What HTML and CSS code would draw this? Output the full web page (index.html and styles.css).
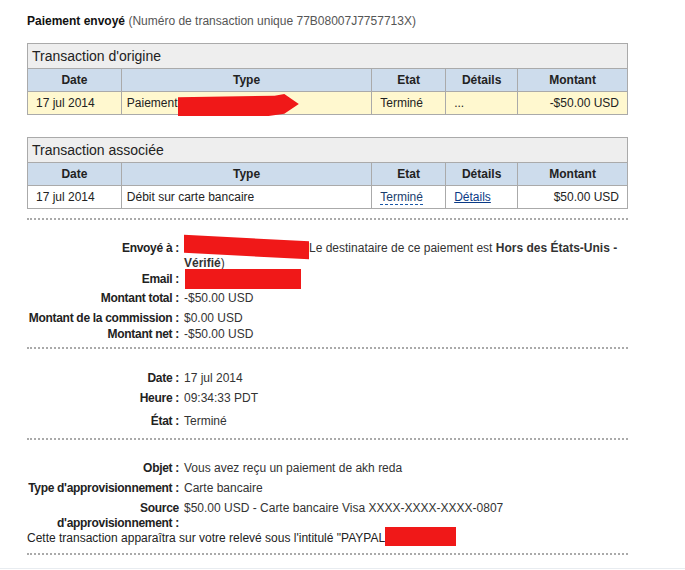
FILE: index.html
```html
<!DOCTYPE html>
<html lang="fr">
<head>
    <meta charset="UTF-8">
    <title>Paiement envoyé</title>
    <link rel="stylesheet" href="styles.css">
</head>
<body>
    <div class="page">
        <p class="title"><b>Paiement envoyé</b> (Numéro de transaction unique 77B08007J7757713X)</p>

        <table class="txn">
            <tr><th class="caption" colspan="5">Transaction d'origine</th></tr>
            <tr class="head">
                <th class="c-date">Date</th>
                <th class="c-type">Type</th>
                <th class="c-etat">Etat</th>
                <th class="c-det">Détails</th>
                <th class="c-amt">Montant</th>
            </tr>
            <tr class="row-hl">
                <td>17 jul 2014</td>
                <td class="type redact-cell">Paiement à <span class="redact arrow"></span></td>
                <td>Terminé</td>
                <td>...</td>
                <td class="amt">-$50.00 USD</td>
            </tr>
        </table>

        <table class="txn second">
            <tr><th class="caption" colspan="5">Transaction associée</th></tr>
            <tr class="head">
                <th class="c-date">Date</th>
                <th class="c-type">Type</th>
                <th class="c-etat">Etat</th>
                <th class="c-det">Détails</th>
                <th class="c-amt">Montant</th>
            </tr>
            <tr>
                <td>17 jul 2014</td>
                <td class="type">Débit sur carte bancaire</td>
                <td><span class="abbr">Terminé</span></td>
                <td><a href="#">Détails</a></td>
                <td class="amt">$50.00 USD</td>
            </tr>
        </table>

        <div class="section first">
            <div class="info sent">
                <span class="label">Envoyé à :</span>
                <span class="value"><span class="redact tilt"></span>Le destinataire de ce paiement est <b>Hors des États-Unis -</b><br><b>Vérifié</b>)</span>
            </div>
            <div class="info mail">
                <span class="label">Email :</span>
                <span class="value"><span class="redact email"></span></span>
            </div>
            <div class="info">
                <span class="label">Montant total :</span>
                <span class="value">-$50.00 USD</span>
            </div>
            <div class="info near">
                <span class="label">Montant de la commission :</span>
                <span class="value">$0.00 USD</span>
            </div>
            <div class="info last">
                <span class="label">Montant net :</span>
                <span class="value">-$50.00 USD</span>
            </div>
        </div>

        <div class="section mid">
            <div class="info">
                <span class="label">Date :</span>
                <span class="value">17 jul 2014</span>
            </div>
            <div class="info wide">
                <span class="label">Heure :</span>
                <span class="value">09:34:33 PDT</span>
            </div>
            <div class="info last">
                <span class="label">État :</span>
                <span class="value">Terminé</span>
            </div>
        </div>

        <div class="section">
            <div class="info">
                <span class="label">Objet :</span>
                <span class="value">Vous avez reçu un paiement de akh reda</span>
            </div>
            <div class="info">
                <span class="label">Type d'approvisionnement :</span>
                <span class="value">Carte bancaire</span>
            </div>
            <div class="info source">
                <span class="label">Source<br>d'approvisionnement :</span>
                <span class="value">$50.00 USD - Carte bancaire Visa XXXX-XXXX-XXXX-0807</span>
            </div>
            <p class="note">Cette transaction apparaîtra sur votre relevé sous l'intitulé "PAYPAL<span class="redact paypal"></span></p>
        </div>
        <div class="section end"></div>
    </div>
    <div class="footer-line"></div>
</body>
</html>
```

FILE: styles.css
```css
* {
    margin: 0;
    padding: 0;
    box-sizing: border-box;
}

body {
    font-family: "Liberation Sans", Arial, sans-serif;
    font-size: 12px;
    color: #222;
    background: #fff;
    overflow: hidden;
}

.page {
    width: 601px;
    margin-left: 27px;
    padding-top: 13px;
}

.title {
    color: #555;
    line-height: 16px;
    margin-bottom: 14px;
}

.title b {
    color: #111;
}

.txn {
    width: 601px;
    border-collapse: collapse;
    border: 1px solid #aaa;
}

.txn.second {
    margin-top: 22px;
}

.txn th, .txn td {
    border: 1px solid #aaa;
    padding: 0 8px;
    height: 23px;
}

.txn td.type {
    padding-left: 5px;
}

.txn .caption {
    background-color: #eeeeee;
    font-size: 14px;
    font-weight: normal;
    text-align: left;
    padding-left: 4px;
    height: 25px;
    color: #222;
}

.head th {
    background-color: #cddcec;
    font-weight: bold;
    text-align: center;
    color: #222;
}

.c-date { width: 94px; }
.c-type { width: 251px; }
.c-etat { width: 74px; }
.c-det { width: 72px; }
.c-amt { width: 110px; }

.row-hl td {
    background-color: #fff8cf;
}

.txn .amt {
    text-align: right;
}

.redact-cell {
    position: relative;
}

.redact {
    display: inline-block;
    background-color: #f01818;
    vertical-align: middle;
}

.redact.arrow {
    position: absolute;
    left: 56px;
    top: 2px;
    width: 121px;
    height: 22px;
    clip-path: polygon(0 15%, 80% 8%, 88% 0, 100% 45%, 88% 90%, 75% 100%, 0 100%);
}

.abbr {
    color: #1a3d6e;
    border-bottom: 1px dashed #1a58a8;
}

a {
    color: #0a3a86;
    text-decoration: underline;
}

.section {
    border-top: 2px dotted #aaa;
    padding: 21px 0 8px;
}

.section.first {
    margin-top: 9px;
    padding: 21px 0 6px;
}

.section.mid {
    padding: 22px 0 10px;
}

.info {
    display: flex;
    line-height: 14px;
    margin-bottom: 6px;
}

.info.sent {
    margin-bottom: -1px;
}

.info.mail {
    margin-bottom: 2px;
    align-items: center;
}

.info.near {
    margin-bottom: 2px;
}

.info.wide {
    margin-bottom: 9px;
}

.info.last {
    margin-bottom: 0;
}

.info.source {
    line-height: 15px;
    margin-bottom: 0;
}

.label {
    width: 157px;
    flex-shrink: 0;
    text-align: right;
    font-weight: bold;
    padding-right: 5px;
    color: #222;
    letter-spacing: -0.3px;
    white-space: nowrap;
}

.value {
    color: #333;
    flex: 1;
}

.redact.tilt {
    width: 125px;
    height: 18px;
    margin-top: -4px;
    transform: skewY(3deg);
}

.redact.email {
    width: 116px;
    height: 20px;
    margin-left: 1px;
}

.redact.paypal {
    width: 71px;
    height: 19px;
    vertical-align: top;
    margin: -4px 0 -1px;
}

.note {
    line-height: 14px;
}

.section.end {
    padding: 0;
}

.footer-line {
    margin-top: 13px;
    border-top: 1px solid #e8ecf0;
}
```
